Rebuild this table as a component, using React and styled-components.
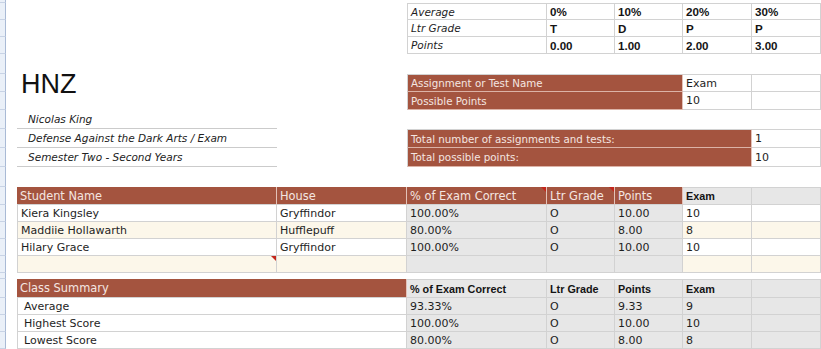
import React from 'react';
import styled, { createGlobalStyle, css } from 'styled-components';

const BROWN = '#a4543f';
const GRID = '#d2d2d2';
const FILL = { white: '#ffffff', cream: '#fcf7ea', gray: '#e7e7e7' };
const COL = { a: 11, b: 260, c: 130, d: 140, e: 68, f: 68, g: 69, h: 69 };

const scale = [
  ['Average', '0%', '10%', '20%', '30%'],
  ['Ltr Grade', 'T', 'D', 'P', 'P'],
  ['Points', '0.00', '1.00', '2.00', '3.00'],
];

const students = [
  { name: 'Kiera Kingsley', house: 'Gryffindor', pct: '100.00%', grade: 'O', points: '10.00', exam: '10', fill: 'white' },
  { name: 'Maddiie Hollawarth', house: 'Hufflepuff', pct: '80.00%', grade: 'O', points: '8.00', exam: '8', fill: 'cream' },
  { name: 'Hilary Grace', house: 'Gryffindor', pct: '100.00%', grade: 'O', points: '10.00', exam: '10', fill: 'white' },
  { name: '', house: '', pct: '', grade: '', points: '', exam: '', fill: 'cream', note: true },
];

const summary = [
  ['Average', '93.33%', 'O', '9.33', '9'],
  ['Highest Score', '100.00%', 'O', '10.00', '10'],
  ['Lowest Score', '80.00%', 'O', '8.00', '8'],
];

const GlobalStyle = createGlobalStyle`
  html, body { margin: 0; padding: 0; background: #fff; }
  body {
    font-family: "DejaVu Sans", "Liberation Sans", sans-serif;
    color: #1e1e1e;
  }
`;

const Sheet = styled.div`
  width: 821px;
  height: 349px;
  overflow: hidden;
  display: flex;
  flex-direction: column;
  background: #fff;
`;

const Row = styled.div`
  display: flex;
  flex: none;
  height: ${({ $h }) => $h}px;
`;

const RowHead = styled.div`
  width: 6px;
  flex: none;
  box-sizing: border-box;
  background: #eaf0f8;
  border-right: 1px solid #a9bad5;
  border-bottom: 1px solid #c8d3e5;
`;

const Gap = styled.div`
  width: ${({ $w }) => $w}px;
  flex: none;
`;

const noteMark = css`
  &::after {
    content: '';
    position: absolute;
    top: 0;
    right: 0;
    border-style: solid;
    border-width: 0 5px 5px 0;
    border-color: transparent #c3261c transparent transparent;
  }
`;

const cellBase = css`
  width: ${({ $w }) => $w}px;
  flex: none;
  box-sizing: border-box;
  display: flex;
  align-items: center;
  white-space: nowrap;
  position: relative;
  ${({ $note }) => $note && noteMark}
`;

const GridCell = styled.div`
  ${cellBase}
  padding-left: 3px;
  font-size: 11px;
  background: ${({ $fill }) => FILL[$fill || 'white']};
  border-right: 1px solid ${GRID};
  border-bottom: 1px solid ${GRID};
  ${({ $left }) => $left && `border-left: 1px solid ${GRID};`}
  ${({ $top }) => $top && `border-top: 1px solid ${GRID};`}
`;

const ItalicCell = styled(GridCell)`
  font-style: italic;
  font-size: 10.5px;
`;

const BoldCell = styled(GridCell)`
  font-family: "Liberation Sans", Arial, sans-serif;
  font-weight: bold;
  font-size: ${({ $big }) => ($big ? 11.6 : 10.8)}px;
  color: #141414;
`;

const LabelCell = styled.div`
  ${cellBase}
  padding-left: 3px;
  font-size: 10.3px;
  background: ${BROWN};
  color: #f4e6e1;
  border-right: 1px solid #e3c2b8;
  border-bottom: 1px solid #dcb3a7;
  ${({ $left }) => $left && `border-left: 1px solid ${GRID};`}
  ${({ $top }) => $top && `border-top: 1px solid ${GRID};`}
`;

const HeadCell = styled(LabelCell)`
  font-size: 11.4px;
  border-bottom-color: ${GRID};
`;

const Title = styled.div`
  width: ${COL.b}px;
  flex: none;
  align-self: flex-start;
  padding-left: 4px;
  box-sizing: border-box;
  font-family: "Liberation Sans", Arial, sans-serif;
  font-size: 27px;
  line-height: 20px;
  color: #111;
  white-space: nowrap;
`;

const InfoLine = styled.div`
  width: ${COL.b}px;
  flex: none;
  box-sizing: border-box;
  display: flex;
  align-items: center;
  padding-left: 11px;
  font-size: 10.5px;
  font-style: italic;
  color: #222;
  border-bottom: 1px solid #cbcbcb;
  white-space: nowrap;
`;

const SummaryLabel = styled(GridCell)`
  padding-left: 6px;
`;

const App = () => {
  return (
    <Sheet>
      <GlobalStyle />
      <Row $h={3}><RowHead /></Row>

      {scale.map((r, i) => (
        <Row key={r[0]} $h={17}>
          <RowHead />
          <Gap $w={COL.a + COL.b + COL.c} />
          <ItalicCell $w={COL.d} $left $top={i === 0}>{r[0]}</ItalicCell>
          <BoldCell $w={COL.e} $big $top={i === 0}>{r[1]}</BoldCell>
          <BoldCell $w={COL.f} $big $top={i === 0}>{r[2]}</BoldCell>
          <BoldCell $w={COL.g} $big $top={i === 0}>{r[3]}</BoldCell>
          <BoldCell $w={COL.h} $big $top={i === 0}>{r[4]}</BoldCell>
        </Row>
      ))}

      <Row $h={20}><RowHead /></Row>

      <Row $h={18}>
        <RowHead />
        <Gap $w={COL.a} />
        <Title>HNZ</Title>
        <Gap $w={COL.c} />
        <LabelCell $w={COL.d + COL.e + COL.f} $left $top>Assignment or Test Name</LabelCell>
        <GridCell $w={COL.g} $top>Exam</GridCell>
        <GridCell $w={COL.h} $top />
      </Row>
      <Row $h={18}>
        <RowHead />
        <Gap $w={COL.a + COL.b + COL.c} />
        <LabelCell $w={COL.d + COL.e + COL.f} $left>Possible Points</LabelCell>
        <GridCell $w={COL.g}>10</GridCell>
        <GridCell $w={COL.h} />
      </Row>

      <Row $h={19}>
        <RowHead />
        <Gap $w={COL.a} />
        <InfoLine>Nicolas King</InfoLine>
      </Row>
      <Row $h={19}>
        <RowHead />
        <Gap $w={COL.a} />
        <InfoLine>Defense Against the Dark Arts / Exam</InfoLine>
        <Gap $w={COL.c} />
        <LabelCell $w={COL.d + COL.e + COL.f + COL.g} $left $top>Total number of assignments and tests:</LabelCell>
        <GridCell $w={COL.h} $top>1</GridCell>
      </Row>
      <Row $h={19}>
        <RowHead />
        <Gap $w={COL.a} />
        <InfoLine>Semester Two - Second Years</InfoLine>
        <Gap $w={COL.c} />
        <LabelCell $w={COL.d + COL.e + COL.f + COL.g} $left>Total possible points:</LabelCell>
        <GridCell $w={COL.h}>10</GridCell>
      </Row>

      <Row $h={20}><RowHead /></Row>

      <Row $h={18}>
        <RowHead />
        <Gap $w={COL.a} />
        <HeadCell $w={COL.b}>Student Name</HeadCell>
        <HeadCell $w={COL.c}>House</HeadCell>
        <HeadCell $w={COL.d} $note>% of Exam Correct</HeadCell>
        <HeadCell $w={COL.e} $note>Ltr Grade</HeadCell>
        <HeadCell $w={COL.f}>Points</HeadCell>
        <BoldCell $w={COL.g} $fill="gray" $top>Exam</BoldCell>
        <BoldCell $w={COL.h} $fill="gray" $top />
      </Row>
      {students.map((s, i) => (
        <Row key={i} $h={17}>
          <RowHead />
          <Gap $w={COL.a} />
          <GridCell $w={COL.b} $fill={s.fill} $left $note={s.note}>{s.name}</GridCell>
          <GridCell $w={COL.c} $fill={s.fill}>{s.house}</GridCell>
          <GridCell $w={COL.d} $fill="gray">{s.pct}</GridCell>
          <GridCell $w={COL.e} $fill="gray">{s.grade}</GridCell>
          <GridCell $w={COL.f} $fill="gray">{s.points}</GridCell>
          <GridCell $w={COL.g} $fill={s.fill}>{s.exam}</GridCell>
          <GridCell $w={COL.h} $fill={s.fill} />
        </Row>
      ))}

      <Row $h={6}><RowHead /></Row>

      <Row $h={19}>
        <RowHead />
        <Gap $w={COL.a} />
        <HeadCell $w={COL.b + COL.c}>Class Summary</HeadCell>
        <BoldCell $w={COL.d} $fill="gray" $top>% of Exam Correct</BoldCell>
        <BoldCell $w={COL.e} $fill="gray" $top>Ltr Grade</BoldCell>
        <BoldCell $w={COL.f} $fill="gray" $top>Points</BoldCell>
        <BoldCell $w={COL.g} $fill="gray" $top>Exam</BoldCell>
        <BoldCell $w={COL.h} $fill="gray" $top />
      </Row>
      {summary.map((r) => (
        <Row key={r[0]} $h={17}>
          <RowHead />
          <Gap $w={COL.a} />
          <SummaryLabel $w={COL.b + COL.c} $left>{r[0]}</SummaryLabel>
          <GridCell $w={COL.d} $fill="gray">{r[1]}</GridCell>
          <GridCell $w={COL.e} $fill="gray">{r[2]}</GridCell>
          <GridCell $w={COL.f} $fill="gray">{r[3]}</GridCell>
          <GridCell $w={COL.g} $fill="gray">{r[4]}</GridCell>
          <GridCell $w={COL.h} $fill="gray" />
        </Row>
      ))}
    </Sheet>
  );
};

export default App;
